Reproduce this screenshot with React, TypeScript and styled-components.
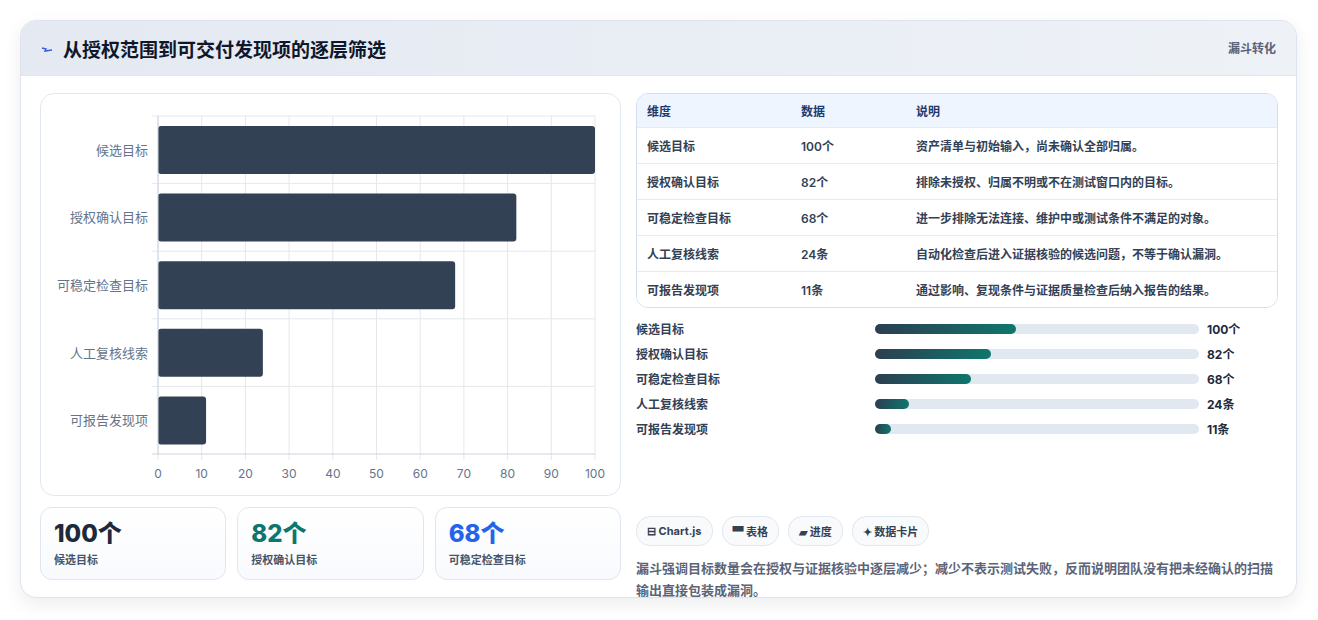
import React from "react";
import styled, { createGlobalStyle } from "styled-components";

const G = createGlobalStyle`
  body{margin:0;background:#fff;font-family:"Inter","Noto Sans CJK SC",sans-serif;}
`;
const Page = styled.div`padding:20px 21px 22px 20px;`;
const Card = styled.div`
  border:1px solid #dde4ee;border-radius:16px;overflow:hidden;
  box-shadow:0 6px 18px rgba(15,23,42,.08);background:#fff;height:578px;box-sizing:border-box;
`;
const Header = styled.div`
  height:55px;background:linear-gradient(90deg,#e4e9f2,#eef2f7);display:flex;justify-content:space-between;
  padding:0 20px;border-bottom:1px solid #e1e7ef;box-sizing:border-box;
`;
const Title = styled.h1`margin:0;font-size:19px;font-weight:700;color:#0f172a;display:flex;align-items:center;gap:10px;height:55px;`;
const Tag = styled.div`font-size:12px;font-weight:700;color:#5b6478;padding-top:18px;`;
const Body = styled.div`display:grid;grid-template-columns:581px 642px;gap:15px;padding:17px 19px 0 19px;`;
const Left = styled.div`display:flex;flex-direction:column;gap:11px;`;
const ChartBox = styled.div`border:1px solid #e2e8f0;border-radius:14px;height:403px;box-sizing:border-box;`;
const Stats = styled.div`display:grid;grid-template-columns:repeat(3,1fr);gap:11px;`;
const Stat = styled.div`border:1px solid #dfe6ef;border-radius:12px;height:73px;padding:12px 13px;box-sizing:border-box;background:linear-gradient(180deg,#fff,#f8fafd);`;
const StatNum = styled.div<{c:string}>`font-size:24px;font-weight:800;color:${p=>p.c};line-height:28px;`;
const StatLbl = styled.div`font-size:11px;color:#475569;margin-top:3px;font-weight:600;`;
const Right = styled.div`display:flex;flex-direction:column;`;
const Table = styled.div`border:1px solid #d3def0;border-radius:12px;overflow:hidden;`;
const Row = styled.div<{h?:boolean}>`
  display:grid;grid-template-columns:154px 115px 1fr;height:${p=>p.h?33:35}px;align-items:center;padding-left:10px;
  font-size:12px;font-weight:${p=>p.h?700:600};color:${p=>p.h?"#1e3a6e":"#334155"};
  background:${p=>p.h?"#eef5ff":"#fff"};border-top:${p=>p.h?"none":"1px solid #e6ebf2"};
`;
const Bars = styled.div`display:flex;flex-direction:column;gap:9px;margin-top:12px;`;
const BarRow = styled.div`display:grid;grid-template-columns:239px 332px 1fr;gap:0;align-items:center;height:16px;font-size:12px;font-weight:700;color:#334155;`;
const Track = styled.div`height:10px;border-radius:5px;background:#e2e8f0;margin-right:8px;`;
const Fill = styled.div`height:10px;border-radius:5px;background:linear-gradient(90deg,#2c3e50,#0f766e);`;
const Val = styled.span`padding-left:0;color:#1e293b;`;
const Chips = styled.div`display:flex;gap:9px;margin-top:80px;`;
const Chip = styled.div`height:28px;padding:0 10px;border:1px solid #e2e8f0;border-radius:14px;display:flex;align-items:center;font-size:11px;font-weight:700;color:#334155;background:#f8fafc;gap:3px;`;
const Note = styled.p`margin:11px 0 0;font-size:13px;line-height:22px;color:#5b6478;font-weight:600;`;

const data = [["候选目标",100,"个","资产清单与初始输入，尚未确认全部归属。"],["授权确认目标",82,"个","排除未授权、归属不明或不在测试窗口内的目标。"],["可稳定检查目标",68,"个","进一步排除无法连接、维护中或测试条件不满足的对象。"],["人工复核线索",24,"条","自动化检查后进入证据核验的候选问题，不等于确认漏洞。"],["可报告发现项",11,"条","通过影响、复现条件与证据质量检查后纳入报告的结果。"]] as [string,number,string,string][];

function Chart(){
  const x0=117,x1=554,y0=22,y1=360,w=(x1-x0)/100,rh=(y1-y0)/5;
  return <svg width="579" height="401" style={{display:"block"}}>
    {Array.from({length:11}).map((_,i)=>{const x=x0+i*10*w;return <g key={i}><line x1={x} x2={x} y1={y0} y2={y1+6} stroke="#e5e7eb"/><text x={x} y={384} fontSize="12" fill="#64748b" textAnchor="middle" fontFamily="Inter">{i*10}</text></g>})}
    {data.map((d,i)=><g key={i}>
      <line x1={x0-6} x2={x1} y1={y0+i*rh} y2={y0+i*rh} stroke="#e5e7eb"/>
      <rect x={x0} y={y0+i*rh+10} width={d[1]*w} height={48} rx="3" fill="#334155"/>
      <text x={x0-10} y={y0+i*rh+rh/2+5} fontSize="13" fill="#64748b" textAnchor="end" fontFamily="Noto Sans CJK SC">{d[0]}</text>
    </g>)}
    <line x1={x0} x2={x0} y1={y0} y2={y1} stroke="#cbd5e1"/>
    <line x1={x0-6} x2={x1} y1={y1} y2={y1} stroke="#cbd5e1"/>
  </svg>;
}

export default function App(){
  return <Page><G/><Card>
    <Header><Title><svg width="12" height="10" viewBox="0 0 12 10"><path d="M1 4 L5 5 L4 7 L11 6" stroke="#3b5bdb" strokeWidth="1.4" fill="none"/></svg>从授权范围到可交付发现项的逐层筛选</Title><Tag>漏斗转化</Tag></Header>
    <Body>
      <Left>
        <ChartBox><Chart/></ChartBox>
        <Stats>
          <Stat><StatNum c="#1e293b">100个</StatNum><StatLbl>候选目标</StatLbl></Stat>
          <Stat><StatNum c="#0f766e">82个</StatNum><StatLbl>授权确认目标</StatLbl></Stat>
          <Stat><StatNum c="#2563eb">68个</StatNum><StatLbl>可稳定检查目标</StatLbl></Stat>
        </Stats>
      </Left>
      <Right>
        <Table>
          <Row h><span>维度</span><span>数据</span><span>说明</span></Row>
          {data.map(d=><Row key={d[0]}><span>{d[0]}</span><span>{d[1]}{d[2]}</span><span>{d[3]}</span></Row>)}
        </Table>
        <Bars>{data.map(d=><BarRow key={d[0]}><span>{d[0]}</span><Track><Fill style={{width:`${d[1]*0.435}%`}}/></Track><Val>{d[1]}{d[2]}</Val></BarRow>)}</Bars>
        <Chips><Chip>⊟ Chart.js</Chip><Chip>▀ 表格</Chip><Chip>▰ 进度</Chip><Chip>✦ 数据卡片</Chip></Chips>
        <Note>漏斗强调目标数量会在授权与证据核验中逐层减少；减少不表示测试失败，反而说明团队没有把未经确认的扫描输出直接包装成漏洞。</Note>
      </Right>
    </Body>
  </Card></Page>;
}
